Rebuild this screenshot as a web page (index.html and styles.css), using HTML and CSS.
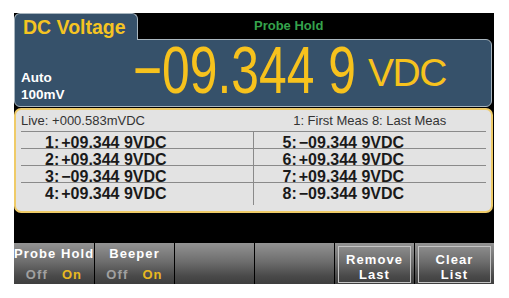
FILE: index.html
```html
<!DOCTYPE html>
<html>
<head>
<meta charset="utf-8">
<link rel="stylesheet" href="styles.css">
</head>
<body>
<div class="screen">
  <div class="top">
    <div class="tab">DC Voltage</div>
    <div class="status">Probe Hold</div>
  </div>
  <div class="panel">
    <div class="range"><div>Auto</div><div>100mV</div></div>
    <div class="reading"><span class="num">−09.344 9</span></div>
    <div class="unit">VDC</div>
  </div>
  <div class="list">
    <div class="lhead">
      <span class="live">Live: +000.583mVDC</span>
      <span class="legend">1: First Meas 8: Last Meas</span>
    </div>
    <div class="rows">
      <div class="cell left">1:<span class="v">+09.344 9VDC</span></div>
      <div class="cell right">5:<span class="v">−09.344 9VDC</span></div>
      <div class="cell left">2:<span class="v">+09.344 9VDC</span></div>
      <div class="cell right">6:<span class="v">+09.344 9VDC</span></div>
      <div class="cell left">3:<span class="v">−09.344 9VDC</span></div>
      <div class="cell right">7:<span class="v">+09.344 9VDC</span></div>
      <div class="cell left last">4:<span class="v">+09.344 9VDC</span></div>
      <div class="cell right last">8:<span class="v">−09.344 9VDC</span></div>
    </div>
  </div>
  <div class="keys">
    <div class="key"><div class="klabel">Probe Hold</div><div class="opts"><span class="off">Off</span><span class="on">On</span></div></div>
    <div class="key"><div class="klabel">Beeper</div><div class="opts"><span class="off">Off</span><span class="on">On</span></div></div>
    <div class="key"></div>
    <div class="key"></div>
    <div class="key"><div class="btn">Remove<br>Last</div></div>
    <div class="key"><div class="btn">Clear<br>List</div></div>
  </div>
</div>
</body>
</html>
```
FILE: styles.css
```css
html, body {
  margin: 0;
  padding: 0;
  background: #ffffff;
}
body {
  width: 509px;
  height: 298px;
  overflow: hidden;
  font-family: "Liberation Sans", Arial, sans-serif;
}
.screen {
  margin: 13px 0 0 14px;
  width: 480px;
  height: 271px;
  background: #000;
  display: flex;
  flex-direction: column;
}
.top {
  height: 26px;
  display: flex;
  align-items: flex-start;
}
.tab {
  position: relative;
  z-index: 1;
  width: 122px;
  height: 26px;
  margin-bottom: -1px;
  box-sizing: content-box;
  background: #36516a;
  border: 1px solid #a9b6bf;
  border-bottom: none;
  border-radius: 6px 6px 0 0;
  color: #f5c422;
  font-weight: bold;
  font-size: 19.5px;
  line-height: 26px;
  text-indent: 8px;
  white-space: nowrap;
}
.status {
  margin-left: 116px;
  color: #35a34c;
  font-weight: bold;
  font-size: 13px;
  line-height: 12px;
  padding-top: 7px;
}
.panel {
  height: 66px;
  width: 476px;
  background: #36516a;
  border: 1px solid #a9b6bf;
  border-radius: 0 6px 6px 6px;
  display: flex;
  align-items: flex-start;
}
.range {
  width: 112px;
  padding-left: 6px;
  margin-top: 29px;
  color: #fff;
  font-weight: bold;
  font-size: 13.5px;
  line-height: 17px;
}
.reading {
  width: 232px;
  height: 60px;
}
.num {
  display: inline-block;
  font-size: 67px;
  line-height: 60px;
  color: #f7c21d;
  white-space: nowrap;
  transform: scaleX(0.743);
  transform-origin: 0 0;
}
.unit {
  margin-top: 13px;
  margin-left: 3px;
  font-size: 39px;
  line-height: 39px;
  color: #f7c21d;
  letter-spacing: -1.5px;
}
.list {
  margin-top: 1px;
  height: 101px;
  width: 475px;
  background: #e3e3e3;
  border: 2px solid #efcb68;
  border-radius: 7px;
}
.lhead {
  margin: 0 5px;
  height: 21px;
  border-bottom: 1px solid #8a8a8a;
  display: grid;
  grid-template-columns: 1fr 1fr;
  font-size: 13px;
  line-height: 15px;
  color: #333;
}
.live {
  padding-top: 3px;
}
.legend {
  padding-top: 3px;
  text-align: center;
}
.rows {
  margin: 0 5px;
  display: grid;
  grid-template-columns: 1fr 1fr;
  grid-template-rows: 17px 17px 17px 22px;
}
.cell {
  box-sizing: border-box;
  border-bottom: 1px solid #8a8a8a;
  padding-top: 5px;
  font-size: 16px;
  font-weight: bold;
  line-height: 11px;
  color: #1a1a1a;
  white-space: nowrap;
}
.cell .v {
  margin-left: 2px;
}
.cell.last {
  border-bottom: none;
}
.left {
  border-right: 1px solid #8a8a8a;
  padding-left: 24px;
}
.right {
  padding-left: 29px;
}
.keys {
  margin-top: 30px;
  height: 41px;
  display: grid;
  grid-template-columns: repeat(6, 1fr);
}
.key {
  background: linear-gradient(#939393, #6e6e6e 45%, #4a4a4a 80%, #3e3e3e);
  border-left: 1px solid #000;
  text-align: center;
  color: #fff;
  font-weight: bold;
  font-size: 13px;
  letter-spacing: 1.1px;
  white-space: nowrap;
  overflow: hidden;
}
.key:first-child {
  border-left: none;
}
.klabel {
  line-height: 20px;
  padding-top: 1px;
}
.opts {
  line-height: 20px;
  padding-top: 1px;
  display: flex;
  justify-content: center;
  gap: 14px;
}
.off {
  color: #a0a0a0;
}
.on {
  color: #e8b820;
}
.btn {
  margin: 3px 3px 0 3px;
  height: 30px;
  padding-top: 5px;
  border: 1px solid #c4c4c4;
  line-height: 15px;
}
```
